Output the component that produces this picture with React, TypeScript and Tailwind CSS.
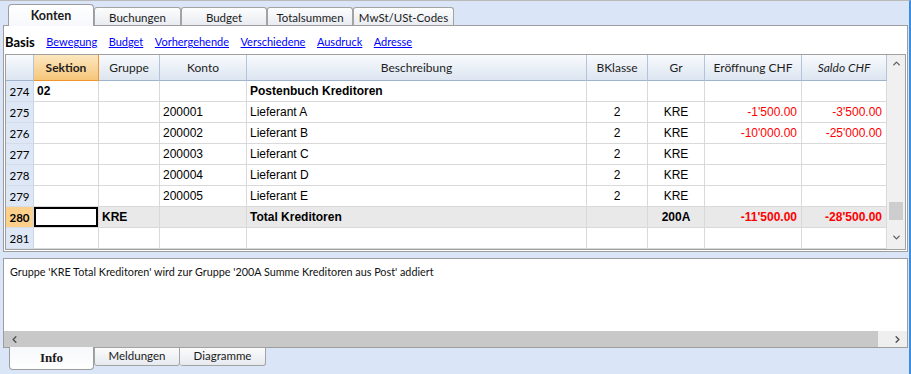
import { ChevronUp, ChevronDown, ChevronLeft, ChevronRight } from 'lucide-react';

type Row = {
    n: number;
    sek?: string;
    gru?: string;
    konto?: string;
    besch?: string;
    bk?: string;
    gr?: string;
    er?: string;
    sa?: string;
    bold?: boolean;
    current?: boolean;
};

const rows: Row[] = [
    { n: 274, sek: '02', besch: 'Postenbuch Kreditoren', bold: true },
    { n: 275, konto: '200001', besch: 'Lieferant A', bk: '2', gr: 'KRE', er: "-1'500.00", sa: "-3'500.00" },
    { n: 276, konto: '200002', besch: 'Lieferant B', bk: '2', gr: 'KRE', er: "-10'000.00", sa: "-25'000.00" },
    { n: 277, konto: '200003', besch: 'Lieferant C', bk: '2', gr: 'KRE' },
    { n: 278, konto: '200004', besch: 'Lieferant D', bk: '2', gr: 'KRE' },
    { n: 279, konto: '200005', besch: 'Lieferant E', bk: '2', gr: 'KRE' },
    { n: 280, gru: 'KRE', besch: 'Total Kreditoren', gr: '200A', er: "-11'500.00", sa: "-28'500.00", bold: true, current: true },
    { n: 281 },
];

const topTabs = [
    { label: 'Buchungen', w: 'w-[87px]' },
    { label: 'Budget', w: 'w-[86px]' },
    { label: 'Totalsummen', w: 'w-[86px]' },
    { label: 'MwSt/USt-Codes', w: 'w-[101px]' },
];

const links = ['Bewegung', 'Budget', 'Vorhergehende', 'Verschiedene', 'Ausdruck', 'Adresse'];

const cell = 'h-full flex items-center border-r border-b border-[#d9d9d9] overflow-hidden whitespace-nowrap';
const head = 'h-full flex items-center justify-center border-r border-b border-r-[#b3c3d9] border-b-[#9fb3cd] bg-linear-to-b from-[#f9fbfd] to-[#dce5f1]';

const TopTabs = () => (
    <div className="h-[24px] flex items-end pl-[8px] font-['Lato',sans-serif] text-[11.5px] text-[#1b1b1b]">
        <div className="relative z-10 -mb-px w-[86px] h-[22px] bg-linear-to-b from-white to-[#f6f8fb] border border-b-0 border-[#9d9d9d] rounded-t-[4px] flex items-center justify-center font-bold text-[12.5px] pt-[1px]">
            Konten
        </div>
        {topTabs.map(t => (
            <div
                key={t.label}
                className={`${t.w} h-[18px] bg-linear-to-b from-[#fdfdfd] to-[#e8ecf1] border border-b-0 border-[#a3a3a3] rounded-t-[3px] flex items-center justify-center pt-[2px]`}
            >
                {t.label}
            </div>
        ))}
    </div>
);

const SubTabs = () => (
    <div className="h-[28px] flex items-start gap-[11.5px] pt-[8px] pl-px font-['Lato',sans-serif] text-[11px] leading-[16px]">
        <span className="font-bold text-[13px] text-black">Basis</span>
        {links.map(l => (
            <span key={l} className="text-[#0000ff] underline">{l}</span>
        ))}
    </div>
);

const Header = () => (
    <div className="h-[26px] flex font-['Lato',sans-serif] text-[12px] text-[#1e1e1e]">
        <div className={`w-[28px] ${head}`} />
        <div className="w-[65px] h-full flex items-center justify-center border-r border-b border-[#f0952f] bg-linear-to-b from-[#fce7bf] to-[#f6c679] font-bold">
            Sektion
        </div>
        <div className={`w-[61px] ${head}`}>Gruppe</div>
        <div className={`w-[87px] ${head}`}>Konto</div>
        <div className={`w-[340px] ${head}`}>Beschreibung</div>
        <div className={`w-[61px] ${head}`}>BKlasse</div>
        <div className={`w-[57px] ${head}`}>Gr</div>
        <div className={`w-[97px] ${head}`}>Eröffnung CHF</div>
        <div className={`w-[85px] ${head} italic`}>Saldo CHF</div>
    </div>
);

const DataRow = ({ r }: { r: Row }) => {
    const bg = r.current ? 'bg-[#e9e9e9]' : '';
    const weight = r.bold ? 'font-bold' : '';
    return (
        <div className={`h-[21px] flex text-[12px] ${weight}`}>
            <div
                className={`w-[28px] h-full flex items-center justify-center pt-px border-r border-b border-r-[#c9d6e8] border-b-[#d5dde8] font-['Lato',sans-serif] text-[11.5px] ${
                    r.current ? 'bg-[#fcd08b] font-bold' : 'bg-[#dde7f5] font-normal'
                }`}
            >
                {r.n}
            </div>
            <div className={`w-[65px] ${cell} pl-[3px] ${r.current ? 'bg-white shadow-[inset_0_0_0_2px_#000]' : ''}`}>{r.sek}</div>
            <div className={`w-[61px] ${cell} ${bg} pl-[3px]`}>{r.gru}</div>
            <div className={`w-[87px] ${cell} ${bg} pl-[3px]`}>{r.konto}</div>
            <div className={`w-[340px] ${cell} ${bg} pl-[3px]`}>{r.besch}</div>
            <div className={`w-[61px] ${cell} ${bg} justify-center`}>{r.bk}</div>
            <div className={`w-[57px] ${cell} ${bg} justify-center`}>{r.gr}</div>
            <div className={`w-[97px] ${cell} ${bg} justify-end pr-[4px] text-[#ff0000]`}>{r.er}</div>
            <div className={`w-[85px] ${cell} ${bg} justify-end pr-[4px] text-[#ff0000]`}>{r.sa}</div>
        </div>
    );
};

const VScroll = () => (
    <div className="w-[18px] h-full bg-[#f0f0f0] flex flex-col">
        <div className="h-[17px] flex items-center justify-center">
            <ChevronUp size={11} strokeWidth={3} className="text-[#606060]" />
        </div>
        <div className="flex-1">
            <div className="mt-[130px] mx-[2px] h-[18px] bg-[#cdcdcd]" />
        </div>
        <div className="h-[19px] flex items-start justify-center pt-[2px]">
            <ChevronDown size={11} strokeWidth={3} className="text-[#606060]" />
        </div>
    </div>
);

const Grid = () => (
    <div className="mx-px mb-px h-[196px] border border-[#a0a0a0] flex">
        <div className="w-[881px] flex flex-col">
            <Header />
            {rows.map(r => (
                <DataRow key={r.n} r={r} />
            ))}
        </div>
        <VScroll />
    </div>
);

const InfoPanel = () => (
    <div className="mt-[6px] ml-[3px] w-[905px] h-[90px] bg-white border border-[#9d9d9d] flex flex-col">
        <div className="h-[72px] pl-[6px] pt-[6px] font-['Lato',sans-serif] text-[10.8px] leading-[14px] text-[#111]">
            Gruppe 'KRE Total Kreditoren' wird zur Gruppe '200A Summe Kreditoren aus Post' addiert
        </div>
        <div className="h-[16px] flex">
            <div className="w-[874px] h-full bg-[#c8c8c8] flex items-center pl-[5px]">
                <ChevronLeft size={11} strokeWidth={3} className="text-[#505050]" />
            </div>
            <div className="flex-1 h-full bg-[#efefef] flex items-center justify-end pr-[4px]">
                <ChevronRight size={11} strokeWidth={3} className="text-[#505050]" />
            </div>
        </div>
    </div>
);

const BottomTabs = () => (
    <div className="flex items-start pl-[9px] font-['Lato',sans-serif] text-[11.5px] text-[#1b1b1b]">
        <div className="relative z-10 -mt-px w-[85px] h-[23px] bg-linear-to-b from-[#f6f8fb] to-white border border-t-0 border-[#9d9d9d] rounded-b-[4px] flex items-center justify-center font-bold font-['Liberation_Serif',serif] text-[13px]">
            Info
        </div>
        <div className="-mt-px w-[86px] h-[19px] bg-linear-to-b from-[#fbfbfb] to-[#e6eaef] border border-[#a3a3a3] rounded-b-[3px] flex items-center justify-center pb-px">
            Meldungen
        </div>
        <div className="-mt-px w-[86px] h-[19px] bg-linear-to-b from-[#fbfbfb] to-[#e6eaef] border border-l-0 border-[#a3a3a3] rounded-b-[3px] flex items-center justify-center pb-px">
            Diagramme
        </div>
    </div>
);

export default function App() {
    return (
        <div className="w-[911px] h-[374px] overflow-hidden bg-[#dae6f8] border-t border-t-[#b9b9b9] border-r-2 border-r-[#3b8de0] font-['Liberation_Sans',Arial,sans-serif] text-black select-none">
            <TopTabs />
            <div className="ml-[3px] w-[905px] h-[227px] bg-white border border-[#9d9d9d] flex flex-col">
                <SubTabs />
                <Grid />
            </div>
            <InfoPanel />
            <BottomTabs />
        </div>
    );
}
